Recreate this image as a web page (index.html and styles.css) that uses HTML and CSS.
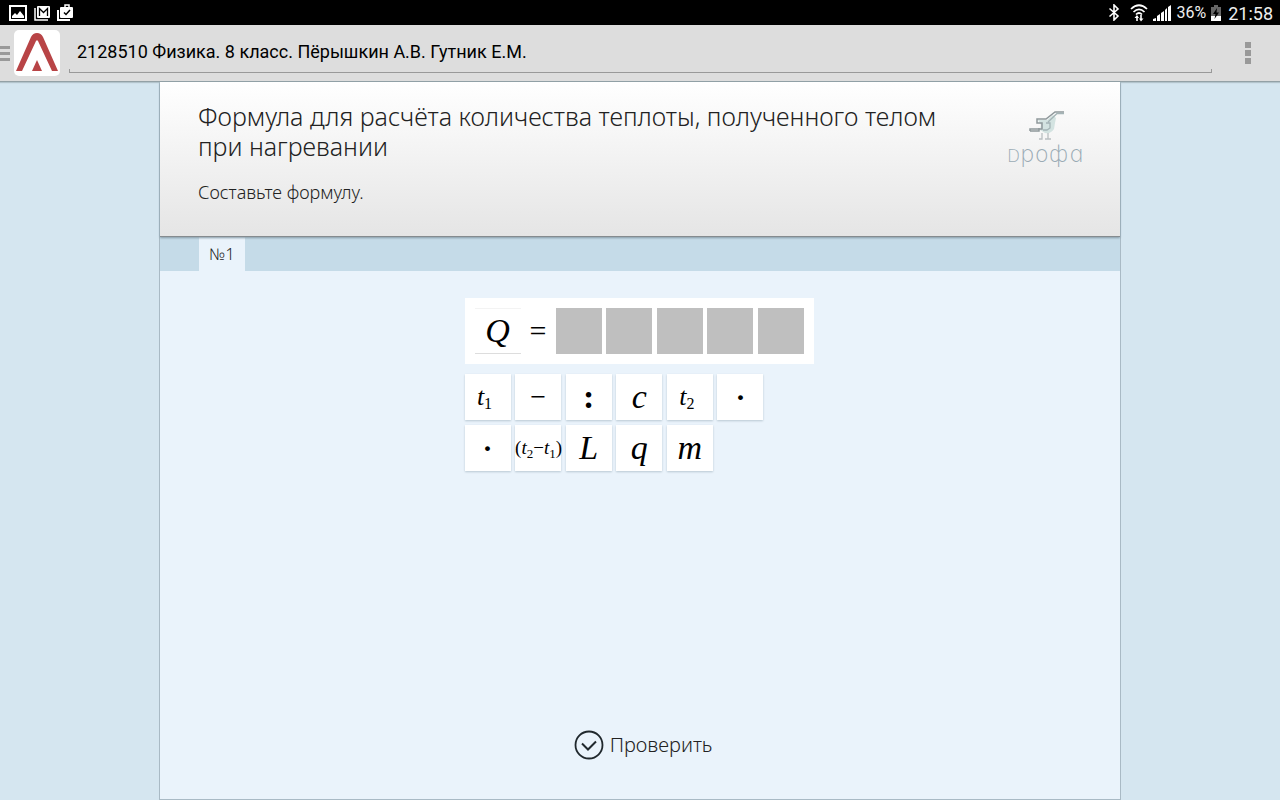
FILE: index.html
```html
<!DOCTYPE html>
<html lang="ru">
<head>
<meta charset="utf-8">
<meta name="viewport" content="width=device-width, initial-scale=1">
<title>Физика. 8 класс</title>
<link rel="stylesheet" href="styles.css">
</head>
<body>
<div class="status-bar">
  <div class="status-group">
    <svg width="18" height="16" viewBox="0 0 18 16" aria-hidden="true"><rect x="1" y="1" width="16" height="14" fill="none" stroke="#fff" stroke-width="2"/><path d="M3 13V11l3-3 2 2 3-4 4 5v2z" fill="#fff"/></svg>
    <svg width="16" height="16" viewBox="0 0 16 16" aria-hidden="true"><path d="M1 3v12h13" fill="none" stroke="#fff" stroke-width="1.500"/><rect x="3" y="1" width="13" height="12" rx="1" fill="#fff"/><path d="M5.500 11V3.500l4 4 4-4V11" fill="none" stroke="#000" stroke-width="1.300"/></svg>
    <svg width="17" height="17" viewBox="0 0 17 17" aria-hidden="true"><path d="M1 6v10h12" fill="none" stroke="#fff" stroke-width="2"/><path d="M8 4V1h4v3" fill="none" stroke="#fff" stroke-width="1.500"/><rect x="3" y="3" width="13" height="11" rx="1" fill="#fff"/><path d="M7 8.500l2 2 4-4.500" fill="none" stroke="#000" stroke-width="1.500"/></svg>
  </div>
  <div class="status-group status-right">
    <svg width="12" height="17" viewBox="0 0 12 17" aria-hidden="true"><path d="M1.500 4.500L10 12l-4 4V1l4 4-8.500 7.500" fill="none" stroke="#fff" stroke-width="1.600"/></svg>
    <svg class="wifi" width="18" height="18" viewBox="0 0 18 18" aria-hidden="true"><path d="M1 5Q9-2.500 17 5M3.500 8Q9 2.500 14.500 8M6 10.500Q9 7.500 12 10.500" fill="none" stroke="#fff" stroke-width="1.700"/><path d="M7 17v-5M11 11v5" stroke="#fff" stroke-width="1.600"/><path d="M4.500 14L7 11l2 3zM9 14.500h4.500L11 17.500z" fill="#fff"/></svg>
    <svg width="18" height="16" viewBox="0 0 18 16" aria-hidden="true"><path d="M0 16v-2l3-1v3zM4 16v-5l3-2v7zM8 16V8l3-2v10zM12 16V5l2-2v13zM15 16V2l3-2v16z" fill="#fff"/></svg>
    <span class="battery-text">36%</span>
    <svg width="10" height="16" viewBox="0 0 10 16" aria-hidden="true"><path d="M3 0h4v2h3v14H0V2h3z" fill="#666"/><path d="M0 11h10v5H0z" fill="#fff"/><path d="M6 3L2 9h2.500L3.500 14 8 7.500H5.500z" fill="#000"/></svg>
    <span class="clock">21:58</span>
  </div>
</div>

<header class="app-bar">
  <button class="drawer" type="button" aria-label="Меню"><span></span><span></span><span></span></button>
  <svg class="app-logo" width="46" height="46" viewBox="0 0 46 46" aria-hidden="true"><rect width="46" height="46" rx="5" fill="#fff"/><path d="M2 41L17 7Q19 3 23 3T29 7L44 41H38L24 11Q23 9.500 22 11L8 41z" fill="#b84446"/><path d="M23 30l5 11H18z" fill="#b84446"/></svg>
  <div class="book-field"><input type="text" aria-label="Название книги" value="2128510 Физика. 8 класс. Пёрышкин А.В. Гутник Е.М."></div>
  <button class="overflow" type="button" aria-label="Ещё"><span></span><span></span><span></span></button>
</header>

<main class="page">
  <section class="intro">
    <div class="intro-text">
      <h1>Формула для расчёта количества теплоты, полученного телом при нагревании</h1>
      <p>Составьте формулу.</p>
    </div>
    <div class="publisher">
      <svg width="36" height="30" viewBox="0 0 36 30" aria-hidden="true"><path d="M9 9h9l6-5 3 3-1 5-1 6q-3 5-9 4l-5-3 1-5z" fill="#d3e3e1"/><path d="M35 1h-9L17 8H8v4h5v6H1v2M1 20h9v-3" fill="none" stroke="#8f989b" stroke-width="1.500"/><path d="M35 2.500h-7L19 11M17 12h4v5l-3 2h-4" fill="none" stroke="#a4b4b6" stroke-width="1.300"/><path d="M13 22v6h-3M19 22v6h-3M19 28h3" fill="none" stroke="#b9bfc1" stroke-width="1.300"/></svg>
      <span class="publisher-name"><span class="publisher-cap">D</span>poфɑ</span>
    </div>
  </section>
  <nav class="tabs"><button class="tab" type="button">№1</button></nav>
  <section class="exercise">
    <div class="board">
      <div class="formula">
        <span class="known">Q</span>
        <span class="equals">=</span>
        <div class="slots">
          <button class="slot" type="button" aria-label="Место 1"></button>
          <button class="slot" type="button" aria-label="Место 2"></button>
          <button class="slot" type="button" aria-label="Место 3"></button>
          <button class="slot" type="button" aria-label="Место 4"></button>
          <button class="slot" type="button" aria-label="Место 5"></button>
        </div>
      </div>
      <div class="tiles">
        <button class="tile indexed" type="button"><span><i>t</i><sub>1</sub></span></button>
        <button class="tile sign" type="button">−</button>
        <button class="tile sign colon" type="button">:</button>
        <button class="tile" type="button"><i>c</i></button>
        <button class="tile indexed" type="button"><span><i>t</i><sub>2</sub></span></button>
        <button class="tile dot" type="button">·</button>
        <button class="tile dot" type="button">·</button>
        <button class="tile group" type="button"><span>(<i>t</i><sub>2</sub>−<i>t</i><sub>1</sub>)</span></button>
        <button class="tile" type="button"><i>L</i></button>
        <button class="tile" type="button"><i>q</i></button>
        <button class="tile" type="button"><i>m</i></button>
      </div>
    </div>
    <button class="check" type="button">
      <svg width="30" height="30" viewBox="0 0 30 30" aria-hidden="true"><circle cx="15" cy="15" r="13.500" fill="none" stroke="#20282d" stroke-width="1.800"/><path d="M8 13.500l6 6 8-8" fill="none" stroke="#20282d" stroke-width="2"/></svg>
      <span>Проверить</span>
    </button>
  </section>
</main>
</body>
</html>
```

FILE: styles.css
```css
* { box-sizing: border-box; }

body {
  margin: 0;
  min-height: 100vh;
  display: flex;
  flex-direction: column;
  background: #d5e6f0;
  color: #222;
  font-family: "Noto Sans", "Open Sans", sans-serif;
}

button {
  margin: 0;
  padding: 0;
  border: 0;
  background: none;
  color: inherit;
  font: inherit;
  cursor: pointer;
}

svg { display: block; flex: none; }

.status-bar {
  display: flex;
  align-items: center;
  justify-content: space-between;
  height: 25px;
  padding: 0 7px 0 9px;
  background: #000;
  color: #eee;
  font-family: Roboto, sans-serif;
}

.status-group { display: flex; align-items: center; gap: 7px; }
.status-right { gap: 5px; }
.wifi { margin-left: 5px; }
.battery-text { font-size: 16px; }
.clock { margin-left: 2px; padding-top: 2px; font-size: 18px; }

.app-bar {
  display: flex;
  align-items: center;
  height: 57px;
  background: #ddd;
  border-bottom: 1px solid #93a1a6;
  box-shadow: 0 1px 1px #b3c4cc;
}

.drawer { display: grid; gap: 3px; width: 10px; margin-right: 4px; }
.drawer span { height: 3px; background: #999; }

.book-field {
  flex: 1;
  height: 40px;
  margin: 0 28px 0 9px;
  border-bottom: 1px solid #999;
  background:
    linear-gradient(#999, #999) left bottom / 1px 3px no-repeat,
    linear-gradient(#999, #999) right bottom / 1px 3px no-repeat;
}

.book-field input {
  width: 100%;
  height: 100%;
  padding: 0 8px 2px;
  border: 0;
  outline: 0;
  background: none;
  color: #000;
  font: 400 18px Roboto, sans-serif;
}

.overflow { display: grid; justify-content: center; gap: 2px; width: 16px; margin-right: 24px; }
.overflow span { width: 6px; height: 6px; background: #999; }

.page {
  flex: 1;
  display: flex;
  flex-direction: column;
  width: 75%;
  min-width: 480px;
  margin: 0 auto;
  background: #eaf3fb;
  box-sizing: content-box;
  border: 1px solid #a9bac5;
  border-top: 0;
}

.intro {
  position: relative;
  display: flex;
  justify-content: space-between;
  gap: 40px;
  min-height: 155px;
  padding: 19px 37px 28px 38px;
  background: linear-gradient(#fff, #e5e5e5);
  border-bottom: 1px solid #858b8f;
  box-shadow: 0 1px 2px #8499a5;
}

.intro-text { flex: 0 1 760px; }

h1 {
  margin: 0;
  font-size: 25px;
  line-height: 30px;
  font-weight: 300;
}

.intro p { margin: 18px 0 0; font-size: 18px; line-height: 26px; font-weight: 300; }

.publisher {
  display: flex;
  flex-direction: column;
  align-items: center;
  padding-top: 10px;
  color: #9aabb5;
}

.publisher svg { margin-left: 4px; }
.publisher-name { font: 200 23px/26px "DejaVu Sans", sans-serif; }
.publisher-cap { font-size: 17px; }

.tabs { display: flex; height: 34px; padding-left: 39px; background: #c5dbe8; }
.tab { width: 46px; background: #eaf3fb; font-size: 16px; font-weight: 300; }

.exercise {
  flex: 1;
  display: flex;
  flex-direction: column;
  align-items: center;
  justify-content: space-between;
  padding: 27px 22px 38px 20px;
}

.board { width: 349px; font-family: "Liberation Serif", serif; color: #000; }

.formula { display: flex; padding: 10px; background: #fff; }

.known, .equals { display: grid; place-items: center; height: 46px; }
.known {
  width: 46px;
  border-top: 1px solid #f3f3f3;
  border-bottom: 1px solid #ddd;
  font-size: 34px;
  font-style: italic;
}
.equals { width: 35px; font-size: 30px; }

.slots { flex: 1; display: flex; justify-content: space-between; }
.slot { width: 46px; height: 46px; background: #bfbfbf; }

.tiles {
  display: grid;
  grid-template-columns: repeat(6, 46px);
  justify-content: space-between;
  row-gap: 5px;
  width: 299px;
  margin-top: 10px;
}

.tile {
  display: grid;
  place-items: center;
  height: 46px;
  background: #fff;
  box-shadow: 0 1px 2px #b9c8d2;
  font-size: 34px;
  line-height: 40px;
}

.tile sub { font-size: 16px; line-height: 0; vertical-align: -4px; }
.indexed { padding-right: 6px; font-size: 26px; }
.sign { font-size: 28px; }
.colon { font-size: 34px; font-weight: bold; }
.dot { font-size: 30px; font-weight: bold; }
.group { font-size: 19px; white-space: nowrap; }
.group sub { font-size: 13px; }

.check { display: flex; align-items: center; gap: 6px; margin-left: 8px; font-size: 20px; line-height: 32px; font-weight: 300; }
```
